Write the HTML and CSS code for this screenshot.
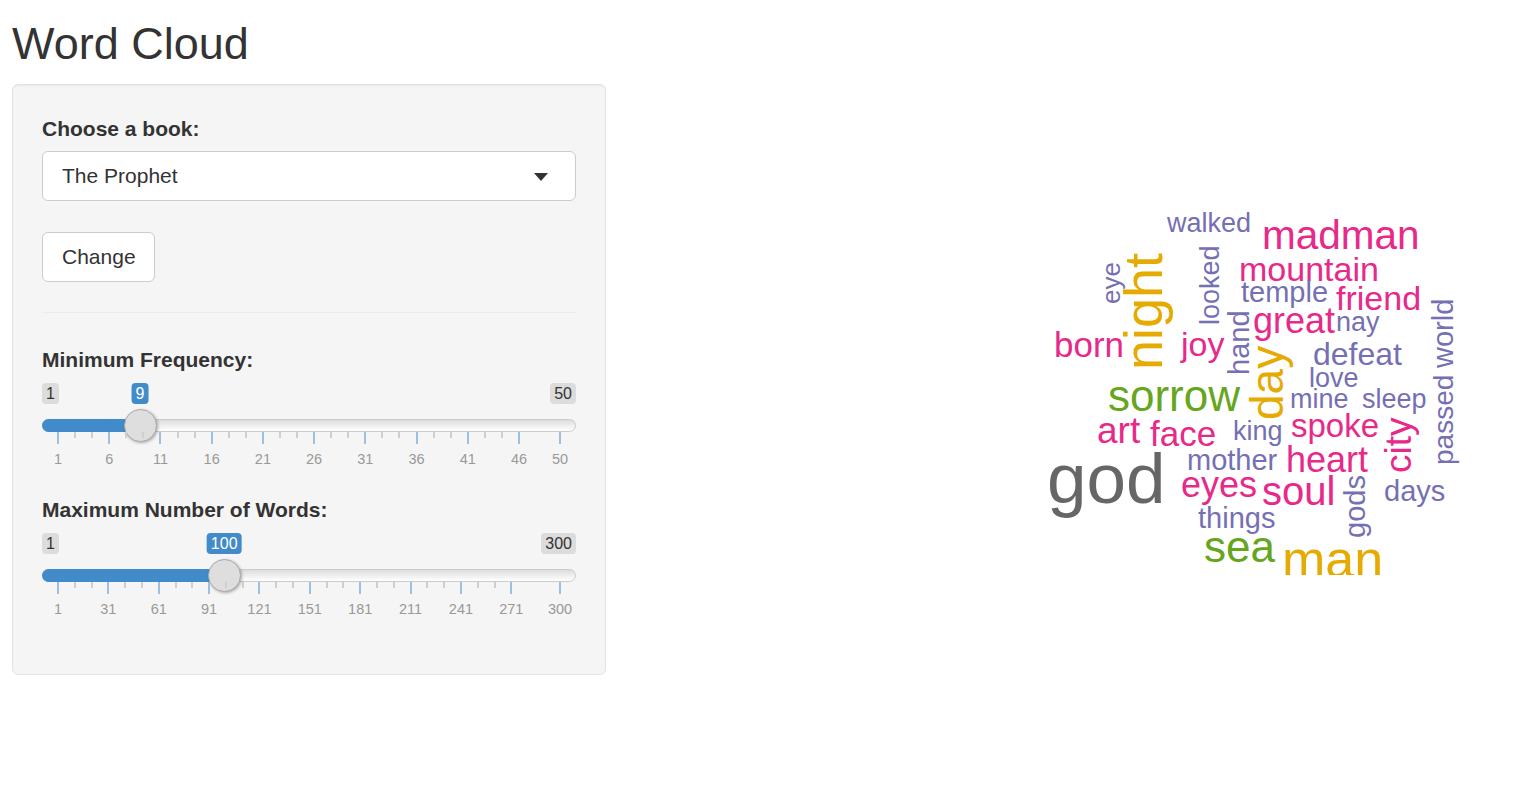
FILE: index.html
```html
<!DOCTYPE html>
<html lang="en">
<head>
<meta charset="utf-8">
<title>Word Cloud</title>
<link rel="stylesheet" href="styles.css">
</head>
<body>
<div class="container">
  <h2 class="title">Word Cloud</h2>
  <div class="layout">
    <aside class="well">
      <div class="form-group">
        <label class="control-label">Choose a book:</label>
        <div class="select">
          <span class="select-value">The Prophet</span>
          <span class="caret"></span>
        </div>
      </div>
      <button class="btn">Change</button>
      <hr class="divider">

      <div class="form-group slider-group">
        <label class="control-label">Minimum Frequency:</label>
        <div class="irs">
          <span class="irs-min">1</span>
          <span class="irs-max">50</span>
          <span class="irs-single" style="--v:0.16327">9</span>
          <span class="irs-line"></span>
          <span class="irs-bar" style="--v:0.16327"></span>
          <span class="irs-handle" style="--v:0.16327"></span>
          <div class="irs-grid">
            <span class="pol" style="--v:0"></span>
            <span class="pol small" style="--v:0.03401"></span>
            <span class="pol small" style="--v:0.06803"></span>
            <span class="pol" style="--v:0.10204"></span>
            <span class="pol small" style="--v:0.13605"></span>
            <span class="pol small" style="--v:0.17007"></span>
            <span class="pol" style="--v:0.20408"></span>
            <span class="pol small" style="--v:0.23810"></span>
            <span class="pol small" style="--v:0.27211"></span>
            <span class="pol" style="--v:0.30612"></span>
            <span class="pol small" style="--v:0.34014"></span>
            <span class="pol small" style="--v:0.37415"></span>
            <span class="pol" style="--v:0.40816"></span>
            <span class="pol small" style="--v:0.44218"></span>
            <span class="pol small" style="--v:0.47619"></span>
            <span class="pol" style="--v:0.51020"></span>
            <span class="pol small" style="--v:0.54422"></span>
            <span class="pol small" style="--v:0.57823"></span>
            <span class="pol" style="--v:0.61224"></span>
            <span class="pol small" style="--v:0.64626"></span>
            <span class="pol small" style="--v:0.68027"></span>
            <span class="pol" style="--v:0.71429"></span>
            <span class="pol small" style="--v:0.74830"></span>
            <span class="pol small" style="--v:0.78231"></span>
            <span class="pol" style="--v:0.81633"></span>
            <span class="pol small" style="--v:0.85034"></span>
            <span class="pol small" style="--v:0.88435"></span>
            <span class="pol" style="--v:0.91837"></span>
            <span class="pol" style="--v:1"></span>
            <span class="grid-text" style="--v:0">1</span>
            <span class="grid-text" style="--v:0.10204">6</span>
            <span class="grid-text" style="--v:0.20408">11</span>
            <span class="grid-text" style="--v:0.30612">16</span>
            <span class="grid-text" style="--v:0.40816">21</span>
            <span class="grid-text" style="--v:0.51020">26</span>
            <span class="grid-text" style="--v:0.61224">31</span>
            <span class="grid-text" style="--v:0.71429">36</span>
            <span class="grid-text" style="--v:0.81633">41</span>
            <span class="grid-text" style="--v:0.91837">46</span>
            <span class="grid-text" style="--v:1">50</span>
          </div>
        </div>
      </div>

      <div class="form-group slider-group">
        <label class="control-label">Maximum Number of Words:</label>
        <div class="irs">
          <span class="irs-min">1</span>
          <span class="irs-max">300</span>
          <span class="irs-single" style="--v:0.33110">100</span>
          <span class="irs-line"></span>
          <span class="irs-bar" style="--v:0.33110"></span>
          <span class="irs-handle" style="--v:0.33110"></span>
          <div class="irs-grid">
            <span class="pol" style="--v:0"></span>
            <span class="pol small" style="--v:0.03344"></span>
            <span class="pol small" style="--v:0.06689"></span>
            <span class="pol" style="--v:0.10033"></span>
            <span class="pol small" style="--v:0.13378"></span>
            <span class="pol small" style="--v:0.16722"></span>
            <span class="pol" style="--v:0.20067"></span>
            <span class="pol small" style="--v:0.23411"></span>
            <span class="pol small" style="--v:0.26756"></span>
            <span class="pol" style="--v:0.30100"></span>
            <span class="pol small" style="--v:0.33445"></span>
            <span class="pol small" style="--v:0.36789"></span>
            <span class="pol" style="--v:0.40134"></span>
            <span class="pol small" style="--v:0.43478"></span>
            <span class="pol small" style="--v:0.46823"></span>
            <span class="pol" style="--v:0.50167"></span>
            <span class="pol small" style="--v:0.53512"></span>
            <span class="pol small" style="--v:0.56856"></span>
            <span class="pol" style="--v:0.60201"></span>
            <span class="pol small" style="--v:0.63545"></span>
            <span class="pol small" style="--v:0.66890"></span>
            <span class="pol" style="--v:0.70234"></span>
            <span class="pol small" style="--v:0.73579"></span>
            <span class="pol small" style="--v:0.76923"></span>
            <span class="pol" style="--v:0.80268"></span>
            <span class="pol small" style="--v:0.83612"></span>
            <span class="pol small" style="--v:0.86957"></span>
            <span class="pol" style="--v:0.90301"></span>
            <span class="pol" style="--v:1"></span>
            <span class="grid-text" style="--v:0">1</span>
            <span class="grid-text" style="--v:0.10033">31</span>
            <span class="grid-text" style="--v:0.20067">61</span>
            <span class="grid-text" style="--v:0.30100">91</span>
            <span class="grid-text" style="--v:0.40134">121</span>
            <span class="grid-text" style="--v:0.50167">151</span>
            <span class="grid-text" style="--v:0.60201">181</span>
            <span class="grid-text" style="--v:0.70234">211</span>
            <span class="grid-text" style="--v:0.80268">241</span>
            <span class="grid-text" style="--v:0.90301">271</span>
            <span class="grid-text" style="--v:1">300</span>
          </div>
        </div>
      </div>
    </aside>

    <main class="main">
      <svg class="cloud" width="918" height="491" viewBox="620 84 918 491" xmlns="http://www.w3.org/2000/svg">
        <g class="words">
          <text class="purple" x="1167" y="232" font-size="27">walked</text>
          <text class="pink" x="1262" y="249" font-size="40.5">madman</text>
          <text class="pink" x="1239" y="281" font-size="34">mountain</text>
          <text class="purple" x="1241" y="302" font-size="29">temple</text>
          <text class="pink" x="1336" y="310" font-size="34">friend</text>
          <text class="pink" x="1253" y="333" font-size="36">great</text>
          <text class="purple" x="1336" y="331" font-size="27">nay</text>
          <text class="pink" x="1054" y="357" font-size="35">born</text>
          <text class="pink" x="1181" y="356" font-size="34">joy</text>
          <text class="purple" x="1313" y="365" font-size="32">defeat</text>
          <text class="purple" x="1309" y="387" font-size="27">love</text>
          <text class="green" x="1108" y="411" font-size="44">sorrow</text>
          <text class="purple" x="1290" y="408" font-size="27">mine</text>
          <text class="purple" x="1362" y="408" font-size="27">sleep</text>
          <text class="pink" x="1097" y="443" font-size="37">art</text>
          <text class="pink" x="1150" y="446" font-size="35">face</text>
          <text class="purple" x="1233" y="440" font-size="27">king</text>
          <text class="pink" x="1291" y="437" font-size="33">spoke</text>
          <text class="purple" x="1187" y="470" font-size="29">mother</text>
          <text class="pink" x="1286" y="472" font-size="36">heart</text>
          <text class="gray" x="1047" y="503" font-size="71">god</text>
          <text class="pink" x="1181" y="497" font-size="36">eyes</text>
          <text class="pink" x="1262" y="505" font-size="40">soul</text>
          <text class="purple" x="1384" y="501" font-size="29">days</text>
          <text class="purple" x="1198" y="528" font-size="29">things</text>
          <text class="green" x="1204" y="562" font-size="44">sea</text>
          <text class="yellow" x="1282" y="577" font-size="52">man</text>

          <text class="purple" transform="translate(1120 304) rotate(-90)" font-size="26">eye</text>
          <text class="yellow" transform="translate(1162 370) rotate(-90)" font-size="54">night</text>
          <text class="purple" transform="translate(1219 325) rotate(-90)" font-size="27">looked</text>
          <text class="purple" transform="translate(1249 375) rotate(-90)" font-size="29">hand</text>
          <text class="yellow" transform="translate(1283 420) rotate(-90)" font-size="46">day</text>
          <text class="pink" transform="translate(1411 473) rotate(-90)" font-size="37">city</text>
          <text class="purple" transform="translate(1365 538) rotate(-90)" font-size="29">gods</text>
          <text class="purple" transform="translate(1453 465) rotate(-90)" font-size="28">passed</text>
          <text class="purple" transform="translate(1453 368) rotate(-90)" font-size="29">world</text>
        </g>
      </svg>
    </main>
  </div>
</div>
</body>
</html>
```

FILE: styles.css
```css
* { box-sizing: border-box; }

html, body {
  margin: 0;
  padding: 0;
  background: #fff;
}

body {
  font-family: "Liberation Sans", Arial, Helvetica, sans-serif;
  font-size: 21px;
  line-height: 1.42857;
  color: #333;
}

.container {
  padding: 0 0 0 12px;
}

.title {
  margin: 19px 0 15px 0;
  font-size: 45px;
  font-weight: normal;
  line-height: 1.1;
  color: #333;
}

.layout {
  display: flex;
  align-items: flex-start;
  gap: 14px;
}

.well {
  width: 594px;
  height: 591px;
  flex: none;
  padding: 29px 29px;
  background: #f5f5f5;
  border: 1px solid #e3e3e3;
  border-radius: 6px;
  box-shadow: inset 0 1px 1px rgba(0, 0, 0, 0.05);
}

.form-group {
  margin: 0;
}

.control-label {
  display: block;
  font-weight: bold;
  font-size: 21px;
  line-height: 30px;
  margin-bottom: 7px;
  color: #333;
}

.select {
  position: relative;
  display: flex;
  align-items: center;
  height: 50px;
  padding: 0 19px;
  background: #fff;
  border: 1px solid #ccc;
  border-radius: 6px;
  font-size: 21px;
  color: #333;
}

.caret {
  position: absolute;
  right: 27px;
  top: 21px;
  width: 0;
  height: 0;
  border-style: solid;
  border-width: 8px 7.5px 0 7.5px;
  border-color: #333 transparent transparent transparent;
}

.btn {
  display: block;
  margin-top: 31px;
  height: 50px;
  padding: 0 18px 0 19px;
  background: #fff;
  border: 1px solid #ccc;
  border-radius: 6px;
  font-family: inherit;
  font-size: 21px;
  color: #333;
}

.divider {
  margin: 30px 0 32px 0;
  border: 0;
  border-top: 1px solid #ebebeb;
}

.slider-group + .slider-group {
  margin-top: 15px;
}

.irs {
  position: relative;
  height: 98px;
  font-family: "Liberation Sans", Arial, sans-serif;
}

.irs-min,
.irs-max,
.irs-single {
  position: absolute;
  top: 1px;
  height: 21px;
  padding: 0 4px;
  font-size: 16px;
  line-height: 21px;
  border-radius: 4px;
}

.irs-min {
  left: 0;
  background: rgba(0, 0, 0, 0.1);
  color: #333;
}

.irs-max {
  right: 0;
  background: rgba(0, 0, 0, 0.1);
  color: #333;
}

.irs-single {
  left: calc(16px + 502px * var(--v));
  transform: translateX(-50%);
  background: #428bca;
  color: #fff;
}

.irs-line {
  position: absolute;
  left: 0;
  right: 0;
  top: 37px;
  height: 13px;
  border: 1px solid #cccccc;
  border-radius: 7px;
  background: linear-gradient(to bottom, #dddddd 0%, #ffffff 100%);
}

.irs-bar {
  position: absolute;
  left: 0;
  top: 37px;
  height: 13px;
  width: calc(16px + 502px * var(--v));
  background: #428bca;
  border-radius: 7px 0 0 7px;
}

.irs-handle {
  position: absolute;
  top: 27px;
  left: calc(16px + 502px * var(--v) - 16px);
  width: 33px;
  height: 33px;
  border-radius: 50%;
  background: #dedede;
  border: 1px solid #ababab;
  box-shadow: 1px 1px 3px rgba(0, 0, 0, 0.3);
}

.irs-grid {
  position: absolute;
  left: 16px;
  width: 502px;
  top: 50px;
  height: 40px;
}

.pol {
  position: absolute;
  top: 0;
  left: calc(502px * var(--v) - 1px);
  width: 2px;
  height: 12px;
  background: #9bc0e2;
}

.pol.small {
  height: 6px;
  background: #cfcfcf;
}

.grid-text {
  position: absolute;
  top: 20px;
  left: calc(502px * var(--v));
  transform: translateX(-50%);
  font-size: 14.5px;
  line-height: 15px;
  color: #999;
}

.main {
  flex: 1;
  min-width: 0;
}

.cloud {
  display: block;
  overflow: hidden;
}

.words text {
  font-family: "Liberation Sans", Arial, Helvetica, sans-serif;
}

.purple { fill: #7570b3; }
.pink { fill: #e7298a; }
.yellow { fill: #e6ab02; }
.green { fill: #66a61e; }
.gray { fill: #666666; }
```
